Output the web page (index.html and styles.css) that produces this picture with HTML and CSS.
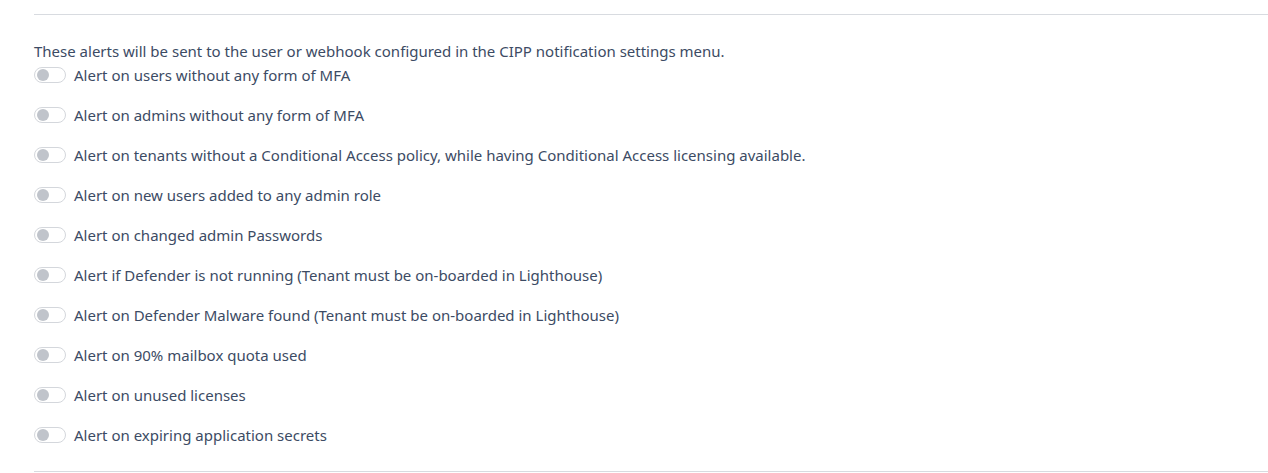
FILE: index.html
```html
<!DOCTYPE html>
<html>
<head>
<meta charset="utf-8">
<link rel="stylesheet" href="styles.css">
</head>
<body>
<div class="panel">
  <hr class="rule top">
  <p class="intro">These alerts will be sent to the user or webhook configured in the CIPP notification settings menu.</p>
  <ul class="alerts">
    <li class="alert"><span class="switch"><span class="knob"></span></span><span class="label">Alert on users without any form of MFA</span></li>
    <li class="alert"><span class="switch"><span class="knob"></span></span><span class="label">Alert on admins without any form of MFA</span></li>
    <li class="alert"><span class="switch"><span class="knob"></span></span><span class="label">Alert on tenants without a Conditional Access policy, while having Conditional Access licensing available.</span></li>
    <li class="alert"><span class="switch"><span class="knob"></span></span><span class="label">Alert on new users added to any admin role</span></li>
    <li class="alert"><span class="switch"><span class="knob"></span></span><span class="label">Alert on changed admin Passwords</span></li>
    <li class="alert"><span class="switch"><span class="knob"></span></span><span class="label">Alert if Defender is not running (Tenant must be on-boarded in Lighthouse)</span></li>
    <li class="alert"><span class="switch"><span class="knob"></span></span><span class="label">Alert on Defender Malware found (Tenant must be on-boarded in Lighthouse)</span></li>
    <li class="alert"><span class="switch"><span class="knob"></span></span><span class="label">Alert on 90% mailbox quota used</span></li>
    <li class="alert"><span class="switch"><span class="knob"></span></span><span class="label">Alert on unused licenses</span></li>
    <li class="alert"><span class="switch"><span class="knob"></span></span><span class="label">Alert on expiring application secrets</span></li>
  </ul>
  <hr class="rule bottom">
</div>
</body>
</html>
```
FILE: styles.css
```css
html, body {
  margin: 0;
  padding: 0;
  background: #ffffff;
}
body {
  font-family: "Noto Sans", sans-serif;
  font-size: 15px;
  color: #3c4b64;
}
.panel {
  padding-left: 34px;
}
.rule {
  border: 0;
  height: 1px;
  background: #d8dbe0;
  margin: 0;
}
.rule.top {
  margin-top: 14px;
}
.intro {
  margin: 25px 0 0 0;
  line-height: 22px;
  height: 22px;
}
.alerts {
  list-style: none;
  margin: 2px 0 0 0;
  padding: 0;
}
.alert {
  display: flex;
  align-items: center;
  height: 22px;
  margin-bottom: 18px;
  gap: 8px;
}
.switch {
  box-sizing: border-box;
  width: 32px;
  height: 16px;
  border: 1px solid #d4d7dc;
  border-radius: 8px;
  display: flex;
  align-items: center;
  padding-left: 2px;
  flex-shrink: 0;
}
.knob {
  width: 12px;
  height: 12px;
  border-radius: 50%;
  background: #c0c4cb;
}
.label {
  line-height: 22px;
  white-space: nowrap;
}
.rule.bottom {
  margin-top: 25px;
}
```
